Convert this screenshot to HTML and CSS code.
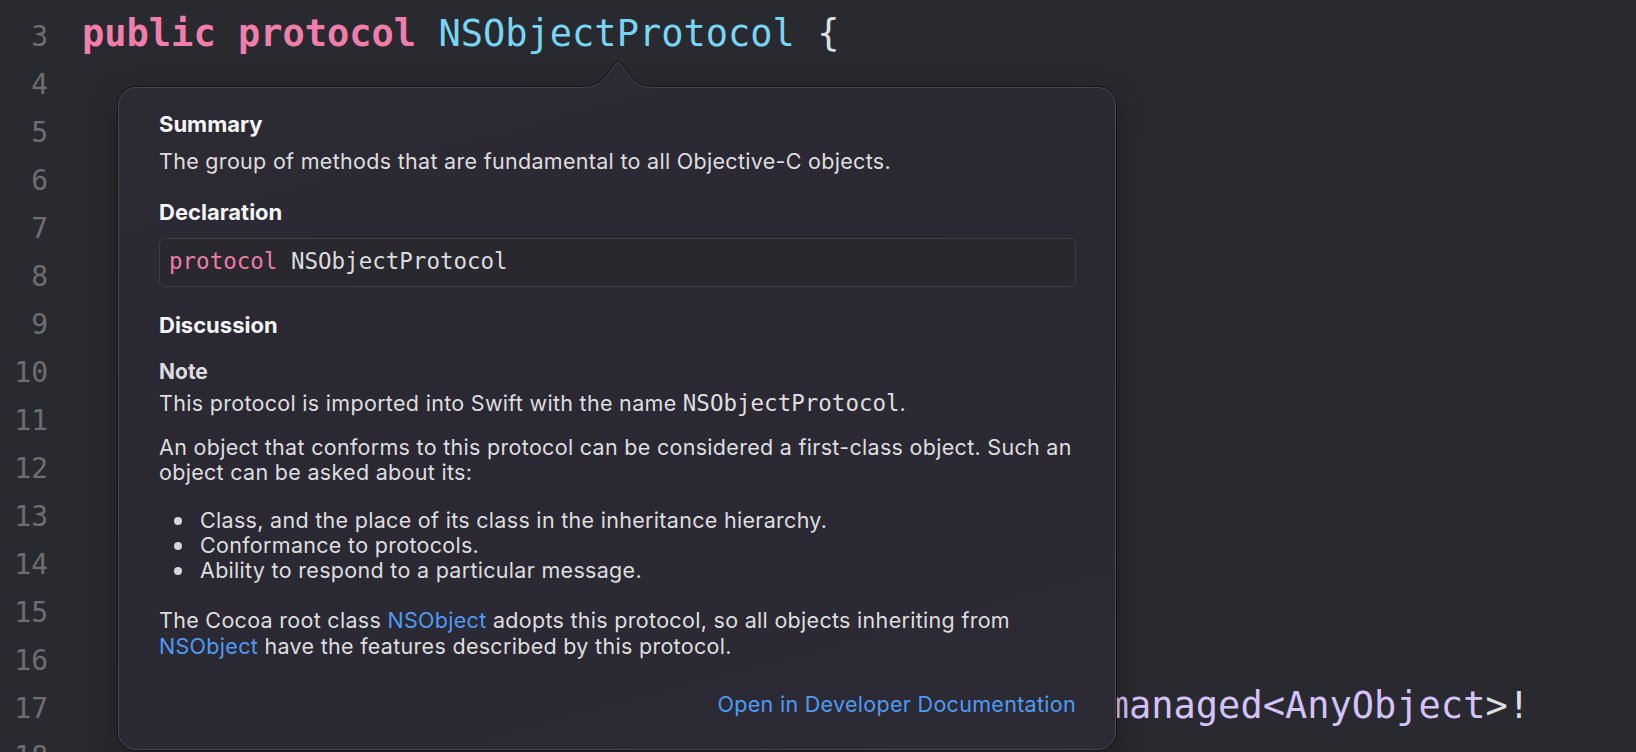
FILE: index.html
```html
<!DOCTYPE html>
<html lang="en">
<head>
<meta charset="utf-8">
<title>NSObjectProtocol – Quick Help</title>
<link rel="stylesheet" href="styles.css">
</head>
<body>
<div class="editor">
  <div class="row"><span class="ln">3</span><span class="src"><span class="kw">public</span> <span class="kw">protocol</span> <span class="decl">NSObjectProtocol</span> {</span></div>
  <div class="row"><span class="ln">4</span><span class="src"></span></div>
  <div class="row"><span class="ln">5</span><span class="src"></span></div>
  <div class="row"><span class="ln">6</span><span class="src"></span></div>
  <div class="row"><span class="ln">7</span><span class="src"></span></div>
  <div class="row"><span class="ln">8</span><span class="src"></span></div>
  <div class="row"><span class="ln">9</span><span class="src"></span></div>
  <div class="row"><span class="ln">10</span><span class="src"></span></div>
  <div class="row"><span class="ln">11</span><span class="src"></span></div>
  <div class="row"><span class="ln">12</span><span class="src"></span></div>
  <div class="row"><span class="ln">13</span><span class="src"></span></div>
  <div class="row"><span class="ln">14</span><span class="src"></span></div>
  <div class="row"><span class="ln">15</span><span class="src"></span></div>
  <div class="row"><span class="ln">16</span><span class="src"></span></div>
  <div class="row"><span class="ln">17</span><span class="src">    <span class="kw">func</span> perform(<span class="kw">_</span> aSelector: <span class="type">Selector</span>!) -&gt; <span class="type">Unmanaged&lt;AnyObject</span>&gt;!</span></div>
  <div class="row"><span class="ln">18</span><span class="src"></span></div>

  <div class="popover">
    <svg class="tail" width="80" height="28" viewBox="0 0 80 28" aria-hidden="true">
      <path class="tail-shadow" d="M0,26.5 C14,26.5 20,25.5 27,16.5 L37,3.5 Q40,-0.5 43,3.5 L53,16.5 C60,25.5 66,26.5 80,26.5"/>
      <path class="tail-fill" d="M0,28 L0,26.5 C14,26.5 20,25.5 27,16.5 L37,3.5 Q40,-0.5 43,3.5 L53,16.5 C60,25.5 66,26.5 80,26.5 L80,28 Z"/>
      <path class="tail-edge" d="M0,26.5 C14,26.5 20,25.5 27,16.5 L37,3.5 Q40,-0.5 43,3.5 L53,16.5 C60,25.5 66,26.5 80,26.5"/>
    </svg>

    <h2 class="sec sec-summary">Summary</h2>
    <p class="txt txt-summary">The group of methods that are fundamental to all Objective-C objects.</p>

    <h2 class="sec sec-decl">Declaration</h2>
    <div class="decl-box"><span class="mkw">protocol</span> NSObjectProtocol</div>

    <h2 class="sec sec-disc">Discussion</h2>
    <h3 class="note">Note</h3>
    <p class="txt txt-note">This protocol is imported into Swift with the name <code>NSObjectProtocol</code>.</p>

    <p class="txt txt-obj">An object that conforms to this protocol can be considered a first-class object. Such an object can be asked about its:</p>

    <ul class="bullets">
      <li>Class, and the place of its class in the inheritance hierarchy.</li>
      <li>Conformance to protocols.</li>
      <li>Ability to respond to a particular message.</li>
    </ul>

    <p class="txt txt-cocoa">The Cocoa root class <a href="#">NSObject</a> adopts this protocol, so all objects inheriting from <a href="#">NSObject</a> have the features described by this protocol.</p>

    <p class="more"><a href="#">Open in Developer Documentation</a></p>
  </div>
</div>
</body>
</html>
```

FILE: styles.css
```css
html, body {
  margin: 0;
  padding: 0;
  background: #292a2f;
}

body {
  width: 1636px;
  height: 752px;
  overflow: hidden;
}

.editor {
  position: relative;
  height: 752px;
  box-sizing: border-box;
  padding-top: 10px;
  overflow: hidden;
  background: #292a2f;
}

.row {
  display: flex;
  align-items: flex-start;
  height: 48px;
}

.ln {
  flex: none;
  width: 48px;
  height: 48px;
  box-sizing: border-box;
  padding-top: 3px;
  text-align: right;
  font-family: "DejaVu Sans Mono", monospace;
  font-size: 28px;
  line-height: 48px;
  color: #6d6d72;
}

.src {
  margin-left: 34px;
  font-family: "DejaVu Sans Mono", monospace;
  font-size: 37px;
  line-height: 48px;
  color: #dfdfe0;
  white-space: pre;
}

.kw {
  color: #f07eaa;
  font-weight: bold;
}

.decl {
  color: #78d6f4;
}

.type {
  color: #d5c2f8;
}

/* Quick Help popover */
.popover {
  position: absolute;
  left: 118px;
  top: 87px;
  width: 998px;
  height: 663px;
  box-sizing: border-box;
  padding: 23px 37px 0 40px;
  border: 1px solid #47464d;
  border-radius: 18px;
  background: linear-gradient(165deg, #2c2a33 0%, #2a2833 45%, #2c2a35 100%);
  box-shadow: 0 0 0 1px #151518, 0 10px 30px rgba(0, 0, 0, 0.35);
  font-family: Inter, "Noto Sans", sans-serif;
  color: #dededf;
}

.tail {
  position: absolute;
  left: 459px;
  top: -27px;
  overflow: visible;
}

.tail-shadow {
  fill: none;
  stroke: #151518;
  stroke-width: 3;
}

.tail-fill {
  fill: #2c2a33;
}

.tail-edge {
  fill: none;
  stroke: #47464d;
  stroke-width: 1;
}

.sec {
  margin: 0;
  font-size: 22px;
  line-height: 26px;
  font-weight: 700;
  color: #f5f5f7;
}

.sec-decl {
  margin-top: 25px;
}

.sec-disc {
  margin-top: 25px;
}

.note {
  margin: 21px 0 0;
  font-size: 21px;
  line-height: 25px;
  font-weight: 700;
  color: #dcdcde;
}

.txt {
  margin: 0;
  font-size: 21.5px;
  letter-spacing: 0.3px;
  line-height: 25px;
  color: #dededf;
}

.txt-summary {
  margin-top: 12px;
}

.txt-note {
  margin-top: 7px;
}

.txt-obj {
  margin-top: 19px;
}

.txt-cocoa {
  margin-top: 25px;
  line-height: 25.5px;
}

.txt code {
  font-family: "DejaVu Sans Mono", monospace;
  font-size: 22.5px;
  letter-spacing: 0;
}

.decl-box {
  margin-top: 13px;
  margin-right: 2px;
  height: 49px;
  box-sizing: border-box;
  padding: 0 0 2px 9px;
  border: 1px solid #3d3d43;
  border-radius: 6px;
  background: #28282e;
  font-family: "DejaVu Sans Mono", monospace;
  font-size: 22.5px;
  line-height: 45px;
  color: #dcdcde;
  white-space: pre;
}

.mkw {
  color: #ef7ca8;
}

.bullets {
  margin: 23px 0 0;
  padding: 0;
  list-style: none;
}

.bullets li {
  display: flex;
  align-items: center;
  font-size: 21.5px;
  letter-spacing: 0.3px;
  line-height: 25px;
  color: #dededf;
}

.bullets li::before {
  content: "";
  flex: none;
  width: 8px;
  height: 8px;
  margin: 0 18px 0 15px;
  border-radius: 50%;
  background: #d6d6d8;
}

a {
  color: #4f9bf1;
  text-decoration: none;
}

.more {
  margin: 33px 2px 0 0;
  text-align: right;
  font-size: 21.5px;
  letter-spacing: 0.3px;
  line-height: 25px;
}
```
